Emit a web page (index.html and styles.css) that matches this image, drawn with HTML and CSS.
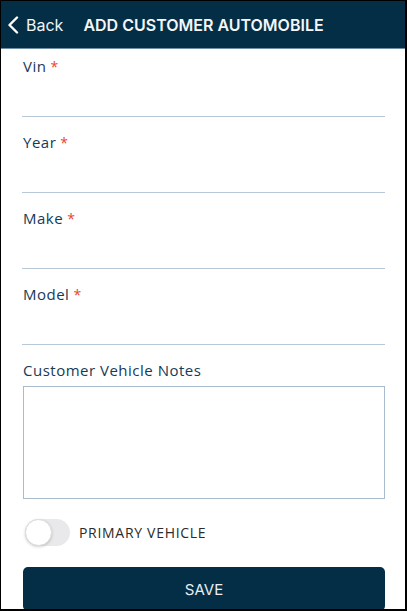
FILE: index.html
```html
<!DOCTYPE html>
<html lang="en">
<head>
<meta charset="utf-8">
<title>Add Customer Automobile</title>
<link rel="stylesheet" href="styles.css">
</head>
<body>
<div class="frame">
  <header class="topbar">
    <a class="back" href="#">
      <svg class="chev" width="12" height="18" viewBox="0 0 12 18" aria-hidden="true">
        <path d="M10 1.5 L2.5 9 L10 16.5" fill="none" stroke="#ffffff" stroke-width="2.4" stroke-linecap="round" stroke-linejoin="round"/>
      </svg>
      <span class="back-text">Back</span>
    </a>
    <h1 class="title">ADD CUSTOMER AUTOMOBILE</h1>
  </header>
  <main class="form">
    <div class="field">
      <label class="label">Vin<span class="req">*</span></label>
      <div class="input"></div>
    </div>
    <div class="field">
      <label class="label">Year<span class="req">*</span></label>
      <div class="input"></div>
    </div>
    <div class="field">
      <label class="label">Make<span class="req">*</span></label>
      <div class="input"></div>
    </div>
    <div class="field">
      <label class="label">Model<span class="req">*</span></label>
      <div class="input"></div>
    </div>
    <div class="notes">
      <label class="label">Customer Vehicle Notes</label>
      <div class="textarea"></div>
    </div>
    <div class="toggle-row">
      <span class="switch"><span class="knob"></span></span>
      <span class="toggle-label">PRIMARY VEHICLE</span>
    </div>
    <button class="save" type="button">SAVE</button>
  </main>
</div>
</body>
</html>
```
FILE: styles.css
```css
* { box-sizing: border-box; }
html, body { margin: 0; padding: 0; }
body { background: #000; }
.frame {
  width: 407px;
  height: 611px;
  border-style: solid;
  border-color: #000;
  border-width: 1px 2px 2px 1px;
  background: #fff;
  overflow: hidden;
  display: flex;
  flex-direction: column;
}
.topbar {
  height: 48px;
  background: #032e46;
  border-bottom: 1px solid #6f8ea3;
  display: flex;
  align-items: center;
  padding-left: 6px;
  flex-shrink: 0;
}
.back {
  display: flex;
  align-items: center;
  text-decoration: none;
  color: #fff;
}
.chev { display: block; margin-top: 0; }
.back-text {
  font-family: "Inter", "Liberation Sans", sans-serif;
  font-size: 16px;
  font-weight: 400;
  margin-left: 7px;
  color: #f2f5f7;
}
.title {
  margin: 0 0 0 20px;
  font-family: "Inter", "Liberation Sans", sans-serif;
  font-size: 16px;
  font-weight: 600;
  color: #f4f6f8;
  letter-spacing: 0;
}
.form {
  padding: 0 20px 0 21px;
  display: flex;
  flex-direction: column;
}
.field { margin-top: 17px; }
.field:first-child { margin-top: 9px; }
.label {
  display: block;
  height: 20px;
  line-height: 16px;
  font-family: "Open Sans", "Liberation Sans", sans-serif;
  font-size: 15px;
  font-weight: 500;
  letter-spacing: 0.5px;
  color: #163b56;
  padding-left: 1px;
}
.req { color: #e8452e; font-size: 14px; margin-left: 4px; }
.input {
  height: 39px;
  border-bottom: 1px solid #b7c9d8;
}
.notes { margin-top: 17px; }
.textarea {
  margin-top: 4px;
  height: 113px;
  border: 1.5px solid #a9bccd;
  margin-left: 1px;
}
.toggle-row {
  margin-top: 20px;
  display: flex;
  align-items: center;
  height: 27px;
  padding-left: 3px;
}
.switch {
  width: 45px;
  height: 27px;
  border-radius: 14px;
  background: #e9e9eb;
  position: relative;
  flex-shrink: 0;
}
.knob {
  position: absolute;
  left: 0;
  top: 0;
  width: 27px;
  height: 27px;
  border-radius: 50%;
  background: #fff;
  border: 1px solid #dcdcdc;
  box-shadow: 0 1px 3px rgba(0,0,0,0.18);
}
.toggle-label {
  margin-left: 9px;
  font-family: "Open Sans", "Liberation Sans", sans-serif;
  font-size: 14px;
  font-weight: 500;
  letter-spacing: 0.7px;
  color: #2b2b2b;
}
.save {
  margin-top: 21px;
  margin-left: 1px;
  height: 44px;
  border: 0;
  border-radius: 5px;
  background: #032e46;
  color: #e9eff3;
  font-family: "Inter", "Liberation Sans", sans-serif;
  font-size: 15px;
  font-weight: 400;
  padding: 0;
}
```
